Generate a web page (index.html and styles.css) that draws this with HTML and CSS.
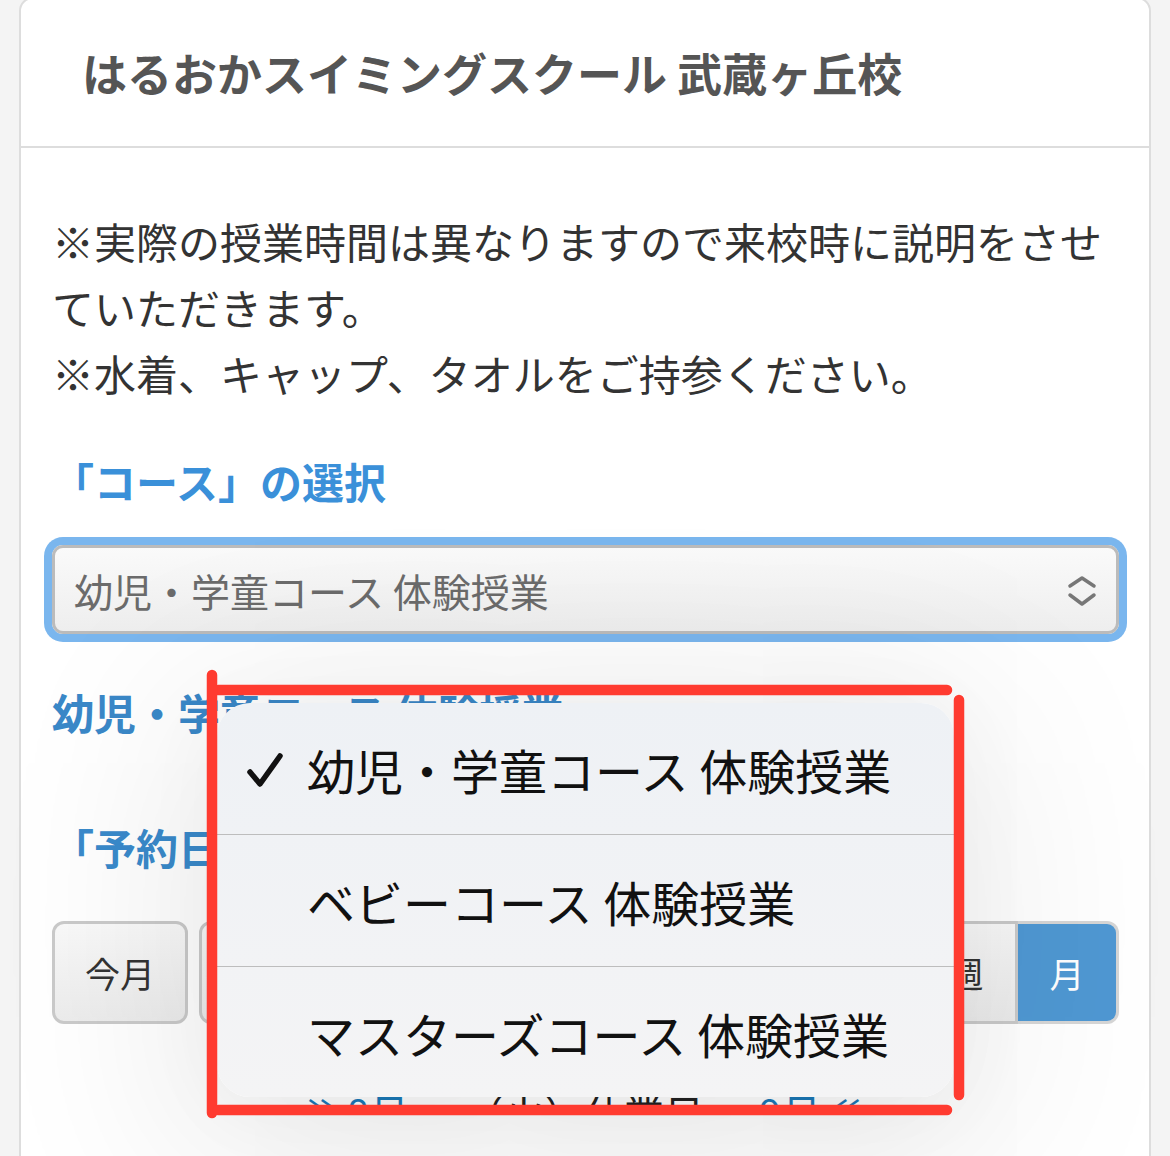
FILE: index.html
```html
<!DOCTYPE html>
<html lang="ja">
<head>
    <meta charset="UTF-8">
    <meta name="viewport" content="width=device-width, initial-scale=1.0">
    <title>体験授業のご予約</title>
    <link rel="stylesheet" href="styles.css">
</head>
<body>
    <div class="panel">
        <div class="panel-heading">
            <h3 class="panel-title">はるおかスイミングスクール 武蔵ヶ丘校</h3>
        </div>

        <div class="panel-body">
            <p class="notice">※実際の授業時間は異なりますので来校時に説明をさせていただきます。<br>※水着、キャップ、タオルをご持参ください。</p>

            <h4 class="section-title">「コース」の選択</h4>

            <div class="course-select">
                <span class="course-select-text">幼児・学童コース 体験授業</span>
                <svg class="course-select-icon" width="30" height="32" viewBox="0 0 30 32">
                    <path d="M3 11 L15 3 L27 11" fill="none" stroke="#777" stroke-width="3.5" stroke-linecap="round" stroke-linejoin="round"/>
                    <path d="M3 20 L15 29 L27 20" fill="none" stroke="#777" stroke-width="3.5" stroke-linecap="round" stroke-linejoin="round"/>
                </svg>
            </div>

            <h4 class="course-name">幼児・学童コース 体験授業</h4>

            <h4 class="section-title date-title">「予約日」の選択</h4>

            <!-- calendar toolbar -->
            <div class="btn-toolbar">
                <div class="btn-group">
                    <button class="btn btn-today">今月</button>
                    <button class="btn btn-prev">＜</button>
                    <button class="btn btn-next">＞</button>
                </div>
                <div class="btn-group btn-group-joined">
                    <button class="btn btn-view">日</button>
                    <button class="btn btn-view">週</button>
                    <button class="btn btn-view active">月</button>
                </div>
            </div>

            <div class="month-nav">
                <a class="month-link">≫8月</a>
                <span class="month-current">（火）休業日</span>
                <a class="month-link">9月≪</a>
            </div>
        </div>
    </div>

    <!-- iOS select popup -->
    <div class="picker">
        <div class="picker-item selected">
            <svg class="picker-check" width="38" height="36" viewBox="0 0 38 36">
                <path d="M4 20 L14 32 L34 4" fill="none" stroke="#111" stroke-width="5.5" stroke-linecap="round" stroke-linejoin="round"/>
            </svg>
            幼児・学童コース 体験授業
        </div>
        <div class="picker-item">ベビーコース 体験授業</div>
        <div class="picker-item">マスターズコース 体験授業</div>
    </div>

    <!-- red annotation frame -->
    <svg class="annotation" width="1170" height="1156" viewBox="0 0 1170 1156">
        <g stroke="#ff3b30" stroke-width="10.5" stroke-linecap="round" fill="none">
            <line x1="218" y1="690" x2="947" y2="690"/>
            <line x1="212" y1="675" x2="212" y2="1113"/>
            <line x1="959" y1="700" x2="959" y2="1095"/>
            <line x1="218" y1="1110" x2="947" y2="1110"/>
        </g>
    </svg>
</body>
</html>
```

FILE: styles.css
```css
/* General styling */
body {
    font-family: "Noto Sans CJK JP", "Noto Sans", sans-serif;
    background-color: #f4f4f4;
    color: #333;
    margin: 0;
    padding: 0;
    overflow: hidden;
}

/* Panel */
.panel {
    margin: -3px 19px 0;
    background-color: #fff;
    border: 2px solid #ddd;
    border-radius: 14px 14px 0 0;
    padding-bottom: 200px;
}

.panel-heading {
    height: 147px;
    display: flex;
    align-items: center;
    padding-left: 61px;
    border-bottom: 2px solid #ddd;
}

.panel-title {
    margin: 0;
    font-size: 45px;
    font-weight: bold;
    color: #555;
}

.panel-body {
    padding: 60px 33px 0 31px;
}

.notice {
    margin: 0;
    font-size: 42px;
    line-height: 66px;
    color: #333;
}

.section-title {
    margin: 45px 0 0;
    font-size: 42px;
    line-height: 60px;
    font-weight: bold;
    color: #3a90d9;
}

.date-title {
    margin-top: 75px;
    color: #3a8acb;
}

/* Select box */
.course-select {
    margin: 34px -3px 0 0;
    height: 83px;
    display: flex;
    align-items: center;
    justify-content: space-between;
    padding: 0 19px 0 19px;
    border: 3px solid #bbb;
    border-radius: 11px;
    background: linear-gradient(#fafafa, #eeeeee);
    box-shadow: 0 0 0 8px #7ab6ee;
}

.course-select-text {
    font-size: 39px;
    color: #6b6b6b;
}

.course-select-icon {
    display: block;
    margin-top: 2px;
}

.course-name {
    margin: 48px 0 0;
    font-size: 42px;
    line-height: 60px;
    font-weight: bold;
    color: #3a88c8;
}

/* Toolbar buttons */
.btn-toolbar {
    margin: 44px -3px 0 0;
    display: flex;
    justify-content: space-between;
}

.btn-group {
    display: flex;
    gap: 11px;
}

.btn {
    height: 103px;
    min-width: 100px;
    padding: 0 30px;
    font-family: inherit;
    font-size: 35px;
    color: #333;
    background: linear-gradient(#f9f9f9, #ececec);
    border: 3px solid #cacaca;
    border-radius: 12px;
}

.btn-today {
    width: 136px;
}

.btn-group-joined {
    gap: 0;
}

.btn-group-joined .btn {
    width: 101px;
    border-radius: 0;
    padding: 0;
}

.btn-group-joined .btn:first-child {
    border-radius: 12px 0 0 12px;
}

.btn-group-joined .btn + .btn {
    border-left: none;
}

.btn-group-joined .btn.active {
    border-radius: 0 12px 12px 0;
    background: #4f98d3;
    color: #fff;
    border-color: #d6d6d6;
}

/* Month navigation - only its top edge shows under the popup */
.month-nav {
    margin-top: 60px;
    height: 26px;
    overflow: hidden;
    display: flex;
    justify-content: center;
    gap: 55px;
    font-size: 40px;
    line-height: 56px;
}

.month-link {
    color: #1b7ab9;
}

.month-current {
    color: #222;
}

/* Picker popup */
.picker {
    position: absolute;
    left: 217px;
    top: 703px;
    width: 737px;
    height: 394px;
    border-radius: 33px;
    background: linear-gradient(#eef1f5, #f4f4f5);
    box-shadow: 0 30px 200px 40px rgba(0, 0, 0, 0.09), 0 10px 90px rgba(0, 0, 0, 0.04);
    overflow: hidden;
}

.picker-item {
    position: relative;
    height: 131px;
    display: flex;
    align-items: center;
    padding-left: 90px;
    font-size: 48px;
    color: #111;
    border-bottom: 1px solid #bdbdbd;
}

.picker-item:last-child {
    border-bottom: none;
}

.picker-check {
    position: absolute;
    left: 29px;
    top: 49px;
}

/* Annotation */
.annotation {
    position: absolute;
    left: 0;
    top: 0;
    pointer-events: none;
}
```
